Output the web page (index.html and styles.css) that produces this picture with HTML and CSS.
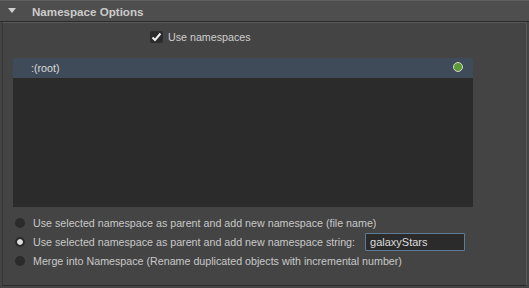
FILE: index.html
```html
<!DOCTYPE html>
<html>
<head>
  <meta charset="utf8">
  <title>Namespace Options</title>
  <link rel="stylesheet" href="styles.css">
</head>
<body>

<div class="frame">
  <div class="section-head">
    <span class="arrow"></span>
    <span class="section-title">Namespace Options</span>
  </div>
  <div class="section-body">
    <div class="check-row">
      <span class="checkbox">
        <svg width="13" height="12" viewBox="0 0 13 12"><path d="M2.5 6.5 L5 9 L10.5 2.5" fill="none" stroke="#f0f0f0" stroke-width="2"/></svg>
      </span>
      <label>Use namespaces</label>
    </div>
    <div class="ns-list">
      <div class="ns-item selected">
        <span>:(root)</span>
        <span class="dot"></span>
      </div>
    </div>
    <div class="radio-row">
      <span class="radio"></span>
      <label>Use selected namespace as parent and add new namespace (file name)</label>
    </div>
    <div class="radio-row">
      <span class="radio on"></span>
      <label>Use selected namespace as parent and add new namespace string:</label>
      <input class="ns-input" type="text" value="galaxyStars" />
    </div>
    <div class="radio-row">
      <span class="radio"></span>
      <label>Merge into Namespace (Rename duplicated objects with incremental number)</label>
    </div>
  </div>
</div>

</body>
</html>
```

FILE: styles.css
```css
body { margin: 0; padding: 0; background: #444; font-family: "Liberation Sans", Arial, sans-serif; font-size: 10.7px; color: #c8c8c8; }
.frame { width: 529px; height: 288px; display: flex; flex-direction: column; }
.section-head { height: 20px; display: flex; align-items: center; background: #4e4e4e; border-top: 1px solid #5e5e5e; border-bottom: 1px solid #2a2a2a; box-sizing: content-box; }
.section-head .arrow { width: 0; height: 0; margin-left: 8px; margin-top: -2px; border-left: 4px solid transparent; border-right: 4px solid transparent; border-top: 5px solid #cfcfcf; }
.section-title { margin-left: 16px; font-weight: bold; font-size: 11.6px; color: #cbcbcb; }
.section-body { flex: 1; margin: 0 2px 2px 2px; background: #444; border-left: 1px solid #353535; border-top: 1px solid #585858; border-right: 1px solid #585858; border-bottom: 1px solid #2c2c2c; }
.check-row { display: flex; align-items: center; height: 13px; margin: 7px 0 0 147px; }
.checkbox { width: 13px; height: 12px; background: #2b2b2b; border-radius: 2px; display: flex; }
.check-row label { margin-left: 5px; color: #cfcfcf; }
.ns-list { width: 460px; height: 149px; margin: 15px 0 0 10px; background: #2b2b2b; }
.ns-item { height: 20px; display: flex; align-items: center; justify-content: space-between; padding: 0 10px 0 18px; color: #dcdcdc; }
.ns-item.selected { background: #3f4b59; }
.dot { width: 8px; height: 8px; border-radius: 50%; background: #5c9a35; border: 1px solid #d4d4d4; margin-top: -3px; }
.radio-row { display: flex; align-items: center; height: 19px; margin-left: 12px; }
.ns-list + .radio-row { margin-top: 6px; }
.radio { width: 10px; height: 10px; border-radius: 50%; background: #2b2b2b; box-sizing: border-box; }
.radio.on { background: #2b2b2b; border: 2px solid #2b2b2b; box-shadow: inset 0 0 0 3px #e0e0e0; }
.radio-row label { margin-left: 8px; }
.ns-input { margin-left: 10px; width: 100px; height: 18px; box-sizing: border-box; background: #2b2b2b; border: 1px solid #5f7b98; border-radius: 1px; color: #dcdcdc; font-family: "Liberation Sans", Arial, sans-serif; font-size: 11px; padding: 1px 4px 0 4px; outline: none; }
```
